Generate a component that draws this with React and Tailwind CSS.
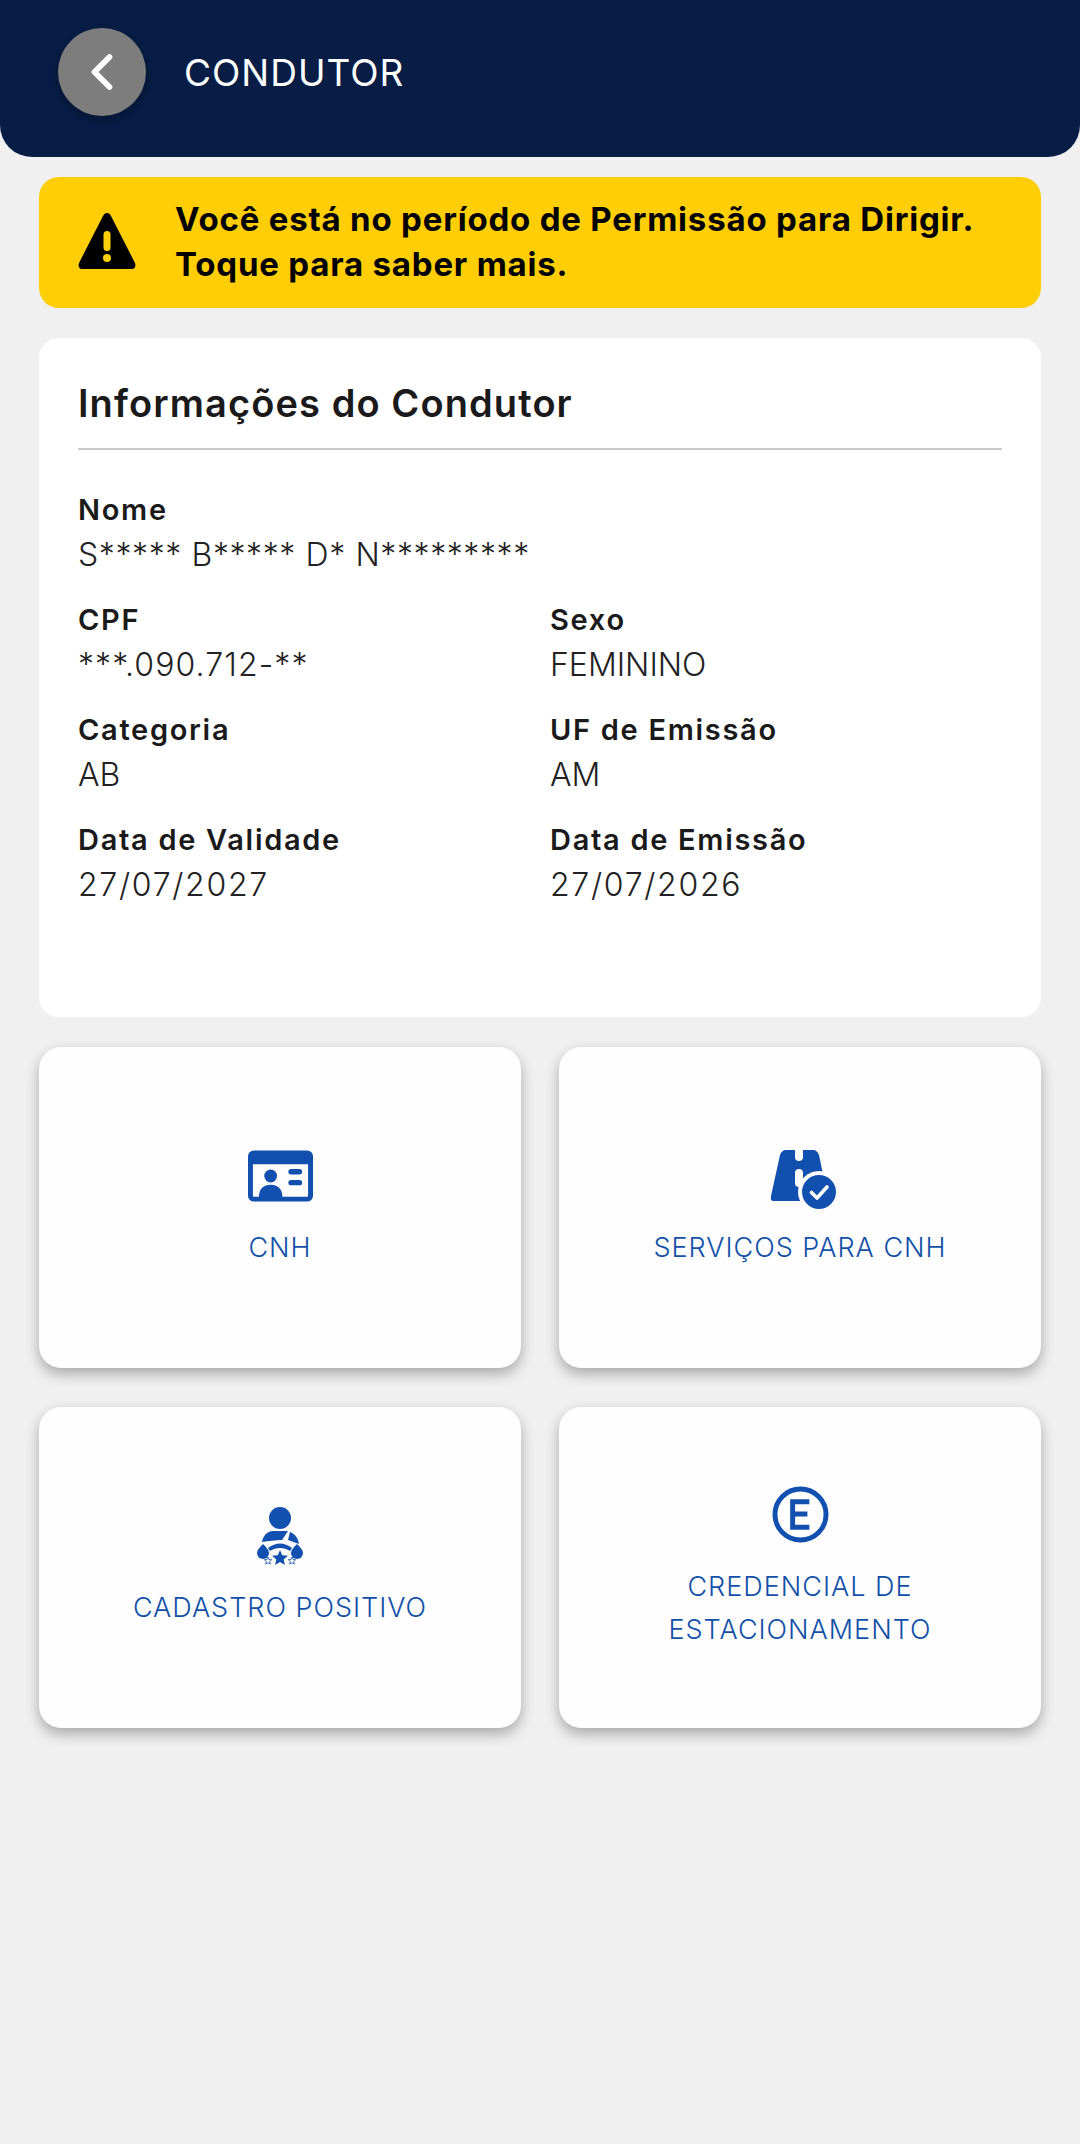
import { ChevronLeft } from 'lucide-react'

const font = { fontFamily: 'Inter, "Noto Sans", sans-serif' }

const CardIcon = () => (
  <svg className="mt-[4px]" width="65" height="52" viewBox="0 0 66 52" fill="#1250b0">
    <path fillRule="evenodd" d="M6 0h54a6 6 0 0 1 6 6v40a6 6 0 0 1-6 6H6a6 6 0 0 1-6-6V6a6 6 0 0 1 6-6Zm-1 14v32a1 1 0 0 0 1 1h54a1 1 0 0 0 1-1V14Z" />
    <circle cx="23" cy="26" r="6.5" />
    <path d="M11 48c0-9 5-13 12-13s12 4 12 13Z" />
    <rect x="41" y="19" width="14" height="5.5" rx="2.75" />
    <rect x="41" y="30" width="14" height="5.5" rx="2.75" />
  </svg>
)

const RoadIcon = () => (
  <svg className="mt-[4px] ml-[8px]" width="66" height="60" viewBox="0 0 66 60" fill="#1250b0">
    <path d="M15 0h9v7a4 4 0 0 0 8 0V0h10c3 0 5 2 6 5l8 38v8H3c-3 0-4-2-3-5L9 5c1-3 3-5 6-5Z" />
    <rect x="24" y="19" width="8" height="18" rx="4" fill="#fdfdfd" />
    <circle cx="48" cy="42" r="21" fill="#fdfdfd" />
    <circle cx="48" cy="42" r="17" />
    <path d="m40.500 42.500 5.500 5.500 10-11" fill="none" stroke="#fff" strokeWidth="3.600" strokeLinecap="round" strokeLinejoin="round" />
  </svg>
)

const DriverIcon = () => (
  <svg className="mt-[1px]" width="46" height="60" viewBox="0 0 46 60" fill="#1250b0">
    <circle cx="23" cy="11" r="11" />
    <path d="M5 35c1-6 5-11 11-11h15l-6 9c-7 0-13 1-20 2Z" />
    <path d="M33 25c5 2 8 6 9 12l-11-4Z" />
    <path d="M11 41c8-6 16-6 24 0l-2 3c-6-4-14-4-20 0Z" />
    <path d="M6 37c3 3 6 6 6 9a6 6 0 0 1-12 0c0-3 3-6 6-9Z" />
    <path d="M40 37c3 3 6 6 6 9a6 6 0 0 1-12 0c0-3 3-6 6-9Z" />
    <path d="m23 43 2.200 5.300 5.800.400-4.400 3.700 1.400 5.600-5-3-5 3 1.400-5.600-4.400-3.700 5.800-.400Z" />
    <path d="m11 50 1 2.500 2.700.200-2 1.800.600 2.600-2.300-1.400-2.300 1.400.600-2.600-2-1.800 2.700-.200Z" fill="none" stroke="#1250b0" strokeWidth="0.800" />
    <path d="m35 50 1 2.500 2.700.200-2 1.800.600 2.600-2.300-1.400-2.300 1.400.600-2.600-2-1.800 2.700-.200Z" fill="none" stroke="#1250b0" strokeWidth="0.800" />
  </svg>
)

const EIcon = () => (
  <svg className="mt-[1px]" width="57" height="57" viewBox="0 0 58 58" fill="none" stroke="#1250b0">
    <circle cx="29" cy="29" r="26" strokeWidth="5" />
    <path d="M38 16H21v26h17M21 28.500h15" strokeWidth="5" />
  </svg>
)

const Field = ({ label, value, valueCls = 'tracking-[0.6px]' }) => (
  <div className="h-[110px]">
    <p className="text-[29px] leading-[44px] font-semibold text-[#1a1a1a] tracking-[1.7px]">{label}</p>
    <p className={`mt-[1px] text-[32px] leading-[44px] font-light text-[#222] ${valueCls}`}>{value}</p>
  </div>
)

const Tile = ({ icon, lines }) => (
  <div className="h-[321px] flex flex-col items-center justify-center bg-[#fdfdfd] rounded-[22px] shadow-[0_6px_14px_rgba(0,0,0,0.3)]">
    <div className="h-[64px] flex items-start justify-center">{icon}</div>
    <div className="mt-[16px] text-center text-[27px] leading-[43px] text-[#1250a8] font-light tracking-[1px]">
      {lines.map(l => <p key={l}>{l}</p>)}
    </div>
  </div>
)

export default function App() {
  return (
    <div className="w-[1080px] h-[2144px] bg-[#f0f0f0] overflow-hidden" style={font}>
      <header className="h-[157px] bg-[#071d45] rounded-b-[32px] flex items-center pl-[58px] pb-[13px]">
        <div className="w-[88px] h-[88px] rounded-full bg-[#7d7d7d] flex items-center justify-center shadow-[0_3px_8px_rgba(0,0,0,0.3)]">
          <ChevronLeft size={60} color="#fff" strokeWidth={2.3} />
        </div>
        <h1 className="ml-[38px] mt-[2px] text-[37px] font-normal text-white tracking-[1px]">CONDUTOR</h1>
      </header>

      <div className="mx-[39px] mt-[20px] h-[131px] bg-[#ffce06] rounded-[20px] flex items-center pl-[39px]">
        <svg className="mb-[3px]" width="58" height="56" viewBox="0 0 58 56">
          <path d="M29 0c2 0 3 1 4 3l24 47c1 3 0 6-3 6H4c-3 0-4-3-3-6L25 3c1-2 2-3 4-3Z" fill="#000" />
          <rect x="25.500" y="18" width="7" height="20" rx="3.500" fill="#ffce06" />
          <circle cx="29" cy="45" r="4" fill="#ffce06" />
        </svg>
        <p className="ml-[39px] mb-[2px] text-[33px] leading-[45px] font-bold text-black tracking-[0.8px]">
          Você está no período de Permissão para Dirigir.<br />Toque para saber mais.
        </p>
      </div>

      <section className="mx-[39px] mt-[30px] h-[679px] bg-white rounded-[20px] px-[39px] pt-[40px]">
        <h2 className="text-[38px] leading-[50px] font-semibold text-[#1a1a1a] tracking-[1.1px] pb-[20px] border-b-2 border-[#c9c9c9]">Informações do Condutor</h2>
        <div className="mt-[38px]">
          <Field label="Nome" value="S***** B***** D* N*********" />
          <div className="grid grid-cols-[472px_1fr]">
            <Field label="CPF" value="***.090.712-**" valueCls="tracking-[1.1px]" />
            <Field label="Sexo" value="FEMININO" valueCls="tracking-normal" />
            <Field label="Categoria" value="AB" valueCls="tracking-normal" />
            <Field label="UF de Emissão" value="AM" valueCls="tracking-normal" />
            <Field label="Data de Validade" value="27/07/2027" valueCls="tracking-[1.7px]" />
            <Field label="Data de Emissão" value="27/07/2026" valueCls="tracking-[1.7px]" />
          </div>
        </div>
      </section>

      <div className="mx-[39px] mt-[30px] grid grid-cols-2 gap-x-[38px] gap-y-[39px]">
        <Tile icon={<CardIcon />} lines={['CNH']} />
        <Tile icon={<RoadIcon />} lines={['SERVIÇOS PARA CNH']} />
        <Tile icon={<DriverIcon />} lines={['CADASTRO POSITIVO']} />
        <Tile icon={<EIcon />} lines={['CREDENCIAL DE', 'ESTACIONAMENTO']} />
      </div>
    </div>
  )
}
